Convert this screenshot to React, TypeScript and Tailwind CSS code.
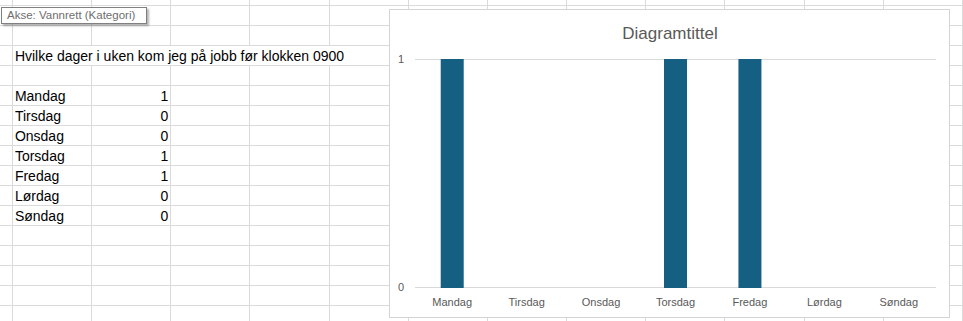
import React from "react";

const days = [
  { name: "Mandag", value: 1 },
  { name: "Tirsdag", value: 0 },
  { name: "Onsdag", value: 0 },
  { name: "Torsdag", value: 1 },
  { name: "Fredag", value: 1 },
  { name: "Lørdag", value: 0 },
  { name: "Søndag", value: 0 },
];

const COLS = 12;
const ROWS = 16;

function Cell({ children, right = false, first = false }: { children?: React.ReactNode; right?: boolean; first?: boolean }) {
  return (
    <div
      className={
        "h-[20px] border-r border-b border-[#dadada] flex items-end pb-[1px] leading-[16px] whitespace-nowrap overflow-hidden " +
        (first ? "w-[13px] " : "w-[80px] ") +
        (right ? "justify-end pr-[2px]" : "pl-[2px]")
      }
    >
      {children}
    </div>
  );
}

function Chart() {
  const left = 25;
  const right = 546;
  const top = 49;
  const base = 277;
  const step = (right - left) / days.length;
  const barW = 23;

  return (
    <div className="absolute left-[389px] top-[9px] w-[561px] h-[309px] bg-white border border-[#d4d4d4]">
      <svg width="559" height="307" className="block" style={{ fontFamily: "'Liberation Sans', Arial, sans-serif" }}>
        <text x="280" y="29" textAnchor="middle" fontSize="17" fill="#595959">
          Diagramtittel
        </text>
        <line x1={left} x2={right} y1={top + 0.5} y2={top + 0.5} stroke="#d9d9d9" />
        <line x1={left} x2={right} y1={base + 0.5} y2={base + 0.5} stroke="#d9d9d9" />
        <text x="14" y={top + 4} textAnchor="end" fontSize="11" fill="#595959">1</text>
        <text x="14" y={base + 4} textAnchor="end" fontSize="11" fill="#595959">0</text>
        {days.map((d, i) => {
          const cx = left + step * (i + 0.5);
          return (
            <g key={d.name}>
              {d.value > 0 && (
                <rect x={cx - barW / 2} y={top} width={barW} height={base - top + 1} fill="#156082" />
              )}
              <text x={cx} y={296} textAnchor="middle" fontSize="11" fill="#595959">
                {d.name}
              </text>
            </g>
          );
        })}
      </svg>
    </div>
  );
}

export default function App() {
  const rows: React.ReactNode[] = [];

  // top partial row
  rows.push(
    <div key="r0" className="flex">
      {Array.from({ length: COLS + 1 }).map((_, c) => (
        <div key={c} className={"h-[6px] border-r border-b border-[#dadada] " + (c === 0 ? "w-[13px]" : "w-[80px]")} />
      ))}
    </div>
  );

  for (let r = 1; r <= ROWS; r++) {
    const dayIdx = r - 5;
    const day = dayIdx >= 0 && dayIdx < days.length ? days[dayIdx] : null;

    if (r === 3) {
      rows.push(
        <div key={r} className="flex">
          <Cell first />
          <div className="w-[400px] h-[20px] border-r border-b border-[#dadada] flex items-end pb-[1px] pl-[2px] leading-[16px] whitespace-nowrap">
            Hvilke dager i uken kom jeg på jobb før klokken 0900
          </div>
          {Array.from({ length: COLS - 5 }).map((_, c) => (
            <Cell key={c} />
          ))}
        </div>
      );
      continue;
    }

    rows.push(
      <div key={r} className="flex">
        <Cell first />
        <Cell>{day ? day.name : null}</Cell>
        <Cell right>{day ? day.value : null}</Cell>
        {Array.from({ length: COLS - 2 }).map((_, c) => (
          <Cell key={c} />
        ))}
      </div>
    );
  }

  return (
    <div
      className="relative w-[963px] h-[321px] overflow-hidden bg-white text-[14px] text-black"
      style={{ fontFamily: "'Liberation Sans', Arial, sans-serif" }}
    >
      <div className="flex flex-col">{rows}</div>

      <Chart />

      <div className="absolute left-[1px] top-[7px] w-[146px] h-[17px] bg-white border border-[#808080] shadow-[2px_2px_2px_rgba(0,0,0,0.3)] flex items-center pl-[5px] text-[11.5px] text-[#6e6e6e] whitespace-nowrap">
        Akse: Vannrett (Kategori)
      </div>
    </div>
  );
}
